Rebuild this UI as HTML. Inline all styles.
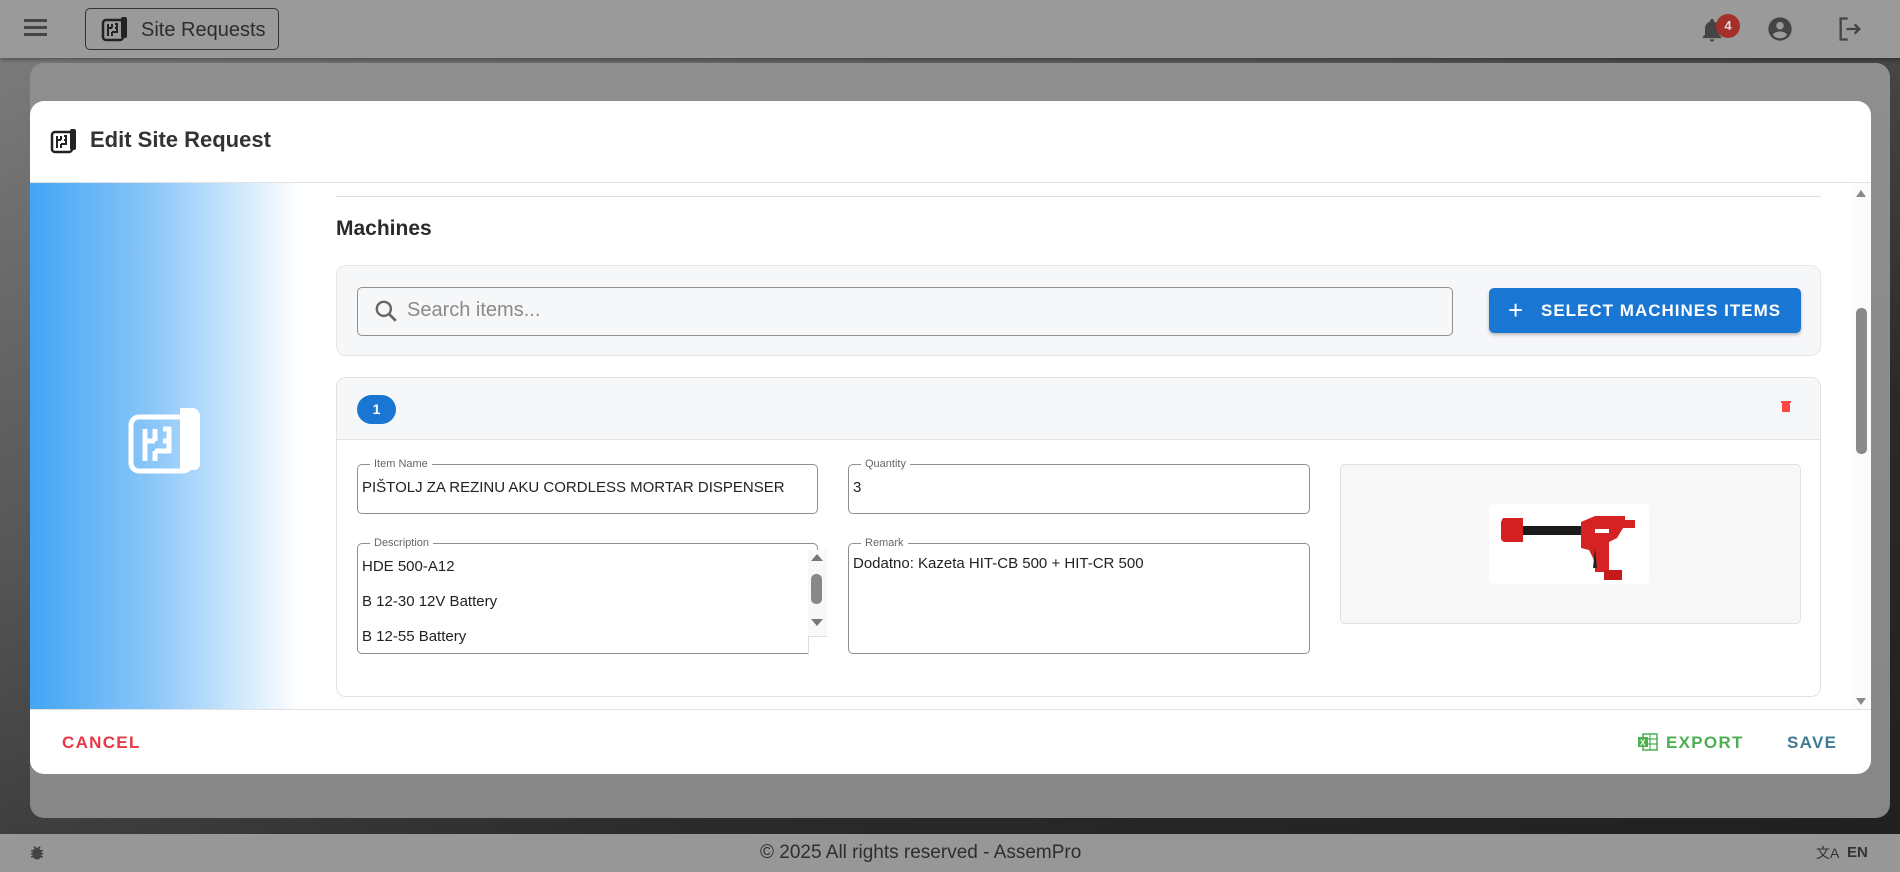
<!DOCTYPE html>
<html><head><meta charset="utf-8"><style>
*{box-sizing:border-box;margin:0;padding:0}
body{width:1900px;height:872px;overflow:hidden;position:relative;font-family:"Liberation Sans",Roboto,sans-serif;background:#6e6e6e}
.abs{position:absolute}
.bg{left:0;top:58px;width:1900px;height:776px;background:linear-gradient(160deg,#7a7a7a 0%,#555 35%,#2a2a2a 70%,#202020 100%)}
.topbar{left:0;top:0;width:1900px;height:58px;background:#9a9a9a;box-shadow:0 2px 4px rgba(0,0,0,.3)}
.card{left:30px;top:63px;width:1860px;height:755px;background:linear-gradient(#8f8f8f,#878787);border-radius:14px}
.footer{left:0;top:834px;width:1900px;height:38px;background:#979797;color:#2e2e2e;font-size:19px;line-height:38px}
.modal{left:30px;top:101px;width:1841px;height:673px;background:#fff;border-radius:14px;overflow:hidden}
.field{position:absolute;border:1.5px solid #8f8f8f;border-radius:5px;background:#fff;font-size:15px;color:#222}
.lbl{position:absolute;top:-8px;left:12px;background:#fff;padding:0 4px;font-size:11px;color:#666;line-height:14px}
</style></head><body>
<div class="abs bg"></div>
<div class="abs topbar">
  <div class="abs" style="left:24px;top:19px;width:23px;height:3px;background:#454545;box-shadow:0 7px 0 #454545,0 14px 0 #454545"></div>
  <div class="abs" style="left:85px;top:8px;width:194px;height:42px;border:1.5px solid #333;border-radius:5px"></div>
  <svg class="abs" style="left:101px;top:15px" width="28" height="28" viewBox="0 0 28 28"><rect x="2" y="5" width="20" height="20" rx="3" fill="none" stroke="#222" stroke-width="2.5"/><path d="M7 9v12M7 13h4M11 9v4M11 17h5v-8h-2M14 13h2M11 17v4" stroke="#222" stroke-width="2" fill="none"/><rect x="20" y="2" width="6" height="21" rx="2" fill="#222"/></svg>
  <div class="abs" style="left:141px;top:19px;font-size:20px;color:#2d2d2d">Site Requests</div>
  <svg class="abs" style="left:1698px;top:15px" width="28" height="30" viewBox="0 0 24 24"><path d="M12 22a2 2 0 0 0 2-2h-4a2 2 0 0 0 2 2zm6-6v-5c0-3-1.6-5.6-4.5-6.3V4a1.5 1.5 0 0 0-3 0v.7C7.6 5.4 6 8 6 11v5l-2 2v1h16v-1z" fill="#444"/></svg>
  <div class="abs" style="left:1716px;top:14px;width:24px;height:24px;border-radius:50%;background:#a5302a;color:#ddd;font-size:13px;font-weight:bold;text-align:center;line-height:24px">4</div>
  <svg class="abs" style="left:1766px;top:15px" width="28" height="28" viewBox="0 0 24 24"><path d="M12 2a10 10 0 1 0 0 20 10 10 0 0 0 0-20zm0 4a3.2 3.2 0 1 1 0 6.4A3.2 3.2 0 0 1 12 6zm0 14a8 8 0 0 1-6-2.8c0-2 4-3.1 6-3.1s6 1.1 6 3.1A8 8 0 0 1 12 20z" fill="#444"/></svg>
  <svg class="abs" style="left:1836px;top:15px" width="28" height="28" viewBox="0 0 24 24"><path d="M10 3H4v18h6" fill="none" stroke="#444" stroke-width="2"/><path d="M9 12h11M16 8l4 4-4 4" fill="none" stroke="#444" stroke-width="2"/></svg>
</div>
<div class="abs card"></div>
<div class="abs footer"><span class="abs" style="left:760px;top:0">© 2025 All rights reserved - AssemPro</span>
  <svg class="abs" style="left:28px;top:10px" width="18" height="18" viewBox="0 0 24 24"><path d="M20 8h-3a6 6 0 0 0-2-2l2-2-1.4-1.4L13 5a6 6 0 0 0-2 0L8.4 2.6 7 4l2 2a6 6 0 0 0-2 2H4v2h2v2H4v2h2v2H4v2h3a6 6 0 0 0 10 0h3v-2h-2v-2h2v-2h-2v-2h2z" fill="#444"/></svg>
  <div class="abs" style="left:1816px;top:0;font-size:14px;color:#333">文A</div>
  <div class="abs" style="left:1847px;top:0;font-size:15px;font-weight:bold;color:#333">EN</div>
</div>
<div class="abs modal">
  <svg class="abs" style="left:20px;top:26px" width="28" height="28" viewBox="0 0 28 28"><rect x="2" y="5" width="20" height="20" rx="3" fill="none" stroke="#222" stroke-width="2.5"/><path d="M7 9v12M7 13h4M11 9v4M11 17h5v-8h-2M14 13h2M11 17v4" stroke="#222" stroke-width="2" fill="none"/><rect x="20" y="2" width="6" height="21" rx="2" fill="#222"/></svg>
  <div class="abs" style="left:60px;top:26px;font-size:22px;font-weight:bold;color:#333">Edit Site Request</div>
  <div class="abs" style="left:0;top:81px;width:1841px;height:1px;background:#e2e2e2"></div>
  <div class="abs" style="left:0;top:82px;width:270px;height:526px;background:linear-gradient(90deg,#42a5f5 0%,#8ac6f8 45%,#fff 100%)"></div>
  <svg class="abs" style="left:98px;top:304px" width="76" height="70" viewBox="0 0 76 70"><rect x="3" y="12" width="60" height="54" rx="8" fill="none" stroke="#fff" stroke-width="5"/><path d="M17 24v32M17 36h10M27 24v12M27 46h14V24h-6M35 36h6M27 46v10" stroke="#fff" stroke-width="5" fill="none"/><path d="M52 3h12a8 8 0 0 1 8 8v48a6 6 0 0 1-6 6H52z" fill="#fff"/></svg>
  <div class="abs" style="left:306px;top:95px;width:1485px;height:1px;background:#ddd"></div>
  <div class="abs" style="left:306px;top:116px;font-size:21px;font-weight:bold;color:#2a2a2a">Machines</div>
  <div class="abs" style="left:306px;top:164px;width:1485px;height:91px;background:#f6f7f9;border:1px solid #e6e6e6;border-radius:10px"></div>
  <div class="abs" style="left:327px;top:186px;width:1096px;height:49px;border:1.5px solid #8f8f8f;border-radius:5px"></div>
  <svg class="abs" style="left:343px;top:197px" width="26" height="26" viewBox="0 0 24 24"><circle cx="10" cy="10" r="6.5" fill="none" stroke="#666" stroke-width="2.2"/><path d="M15 15l6 6" stroke="#666" stroke-width="2.5"/></svg>
  <div class="abs" style="left:377px;top:198px;font-size:20px;color:#8a8a8a">Search items...</div>
  <div class="abs" style="left:1459px;top:187px;width:312px;height:45px;background:#1976d2;border-radius:5px;box-shadow:0 2px 3px rgba(0,0,0,.25);color:#fff;font-size:17px;font-weight:bold;letter-spacing:1px;line-height:45px;padding-left:52px">SELECT MACHINES ITEMS</div>
  <div class="abs" style="left:1478px;top:199px;color:#fff;font-size:26px;line-height:20px">+</div>
  <div class="abs" style="left:306px;top:276px;width:1485px;height:320px;border:1px solid #e2e2e2;border-radius:10px;overflow:hidden">
    <div style="height:62px;background:#f6f7f9;border-bottom:1px solid #e2e2e2"></div>
  </div>
  <div class="abs" style="left:327px;top:294px;width:39px;height:29px;background:#1976d2;border-radius:15px;color:#fff;font-size:14px;font-weight:bold;text-align:center;line-height:29px">1</div>
  <div class="abs" style="left:1752px;top:302px;width:8px;height:9px;background:#f44;border-radius:1px"></div>
  <div class="abs" style="left:1751px;top:300px;width:10px;height:2px;background:#f44"></div>
  <div class="field" style="left:327px;top:363px;width:461px;height:50px"><span class="lbl">Item Name</span><div style="position:absolute;left:4px;top:14px">PIŠTOLJ ZA REZINU AKU CORDLESS MORTAR DISPENSER</div></div>
  <div class="field" style="left:818px;top:363px;width:462px;height:50px"><span class="lbl">Quantity</span><div style="position:absolute;left:4px;top:14px">3</div></div>
  <div class="field" style="left:327px;top:442px;width:461px;height:111px"><span class="lbl">Description</span>
    <div style="position:absolute;left:4px;top:5px;line-height:35px">HDE 500-A12<br>B 12-30 12V Battery<br>B 12-55 Battery</div>
    <div style="position:absolute;right:-10px;top:6px;width:19px;height:86px;background:#f8f8f8"></div>
    <div style="position:absolute;right:-6px;top:10px;border:6px solid transparent;border-bottom:7px solid #777;border-top:0"></div>
    <div style="position:absolute;right:-5px;top:30px;width:11px;height:30px;background:#888;border-radius:5px"></div>
    <div style="position:absolute;right:-6px;top:75px;border:6px solid transparent;border-top:7px solid #777;border-bottom:0"></div>
    <div style="position:absolute;right:-10px;top:92px;width:19px;height:19px;background:#fff;border-left:1px solid #ddd;border-top:1px solid #ddd"></div>
  </div>
  <div class="field" style="left:818px;top:442px;width:462px;height:111px"><span class="lbl">Remark</span><div style="position:absolute;left:4px;top:11px">Dodatno: Kazeta HIT-CB 500 + HIT-CR 500</div></div>
  <div class="abs" style="left:1310px;top:363px;width:461px;height:160px;background:#f8f8f9;border:1px solid #e0e0e0;border-radius:5px"></div>
  <svg class="abs" style="left:1459px;top:403px" width="160" height="80" viewBox="0 0 160 80"><rect width="160" height="80" rx="5" fill="#fff"/><path d="M14 14h20v8h50v8H34v8H16a4 4 0 0 1-4-4V18z" fill="#d42020"/><rect x="34" y="22" width="62" height="9" fill="#1a1a1a"/><path d="M92 18l14-6h30v4h10v8h-12l-6 10-8 4v30h-14V58l-6-12-8-2z" fill="#d52222"/><rect x="115" y="66" width="18" height="10" fill="#c51a1a"/><path d="M106 44l-2 20h4z" fill="#222"/><rect x="106" y="25" width="14" height="4" fill="#fff"/></svg>
  <div class="abs" style="left:1822px;top:82px;width:19px;height:526px;background:#fbfbfb"></div>
  <div class="abs" style="left:1826px;top:89px;border:5px solid transparent;border-bottom:7px solid #8a8a8a;border-top:0"></div>
  <div class="abs" style="left:1826px;top:207px;width:11px;height:146px;background:#8a8a8a;border-radius:5px"></div>
  <div class="abs" style="left:1826px;top:597px;border:5px solid transparent;border-top:7px solid #8a8a8a;border-bottom:0"></div>
  <div class="abs" style="left:0;top:608px;width:1841px;height:1px;background:#e2e2e2"></div>
  <div class="abs" style="left:32px;top:632px;font-size:17px;font-weight:bold;letter-spacing:1.3px;color:#e53945">CANCEL</div>
  <svg class="abs" style="left:1608px;top:632px" width="20" height="18" viewBox="0 0 20 18"><rect x="5" y="1" width="14" height="16" fill="none" stroke="#4caf50" stroke-width="1.5"/><path d="M5 6h14M5 11h14M12 1v16" stroke="#4caf50" stroke-width="1.2"/><rect x="0" y="4" width="10" height="10" fill="#4caf50"/><text x="2" y="12.5" font-size="8" fill="#fff" font-family="Liberation Sans" font-weight="bold">X</text></svg>
  <div class="abs" style="left:1636px;top:632px;font-size:17px;font-weight:bold;letter-spacing:1.3px;color:#4caf50">EXPORT</div>
  <div class="abs" style="left:1757px;top:632px;font-size:17px;font-weight:bold;letter-spacing:1.3px;color:#3f7c94">SAVE</div>
</div>
</body></html>
